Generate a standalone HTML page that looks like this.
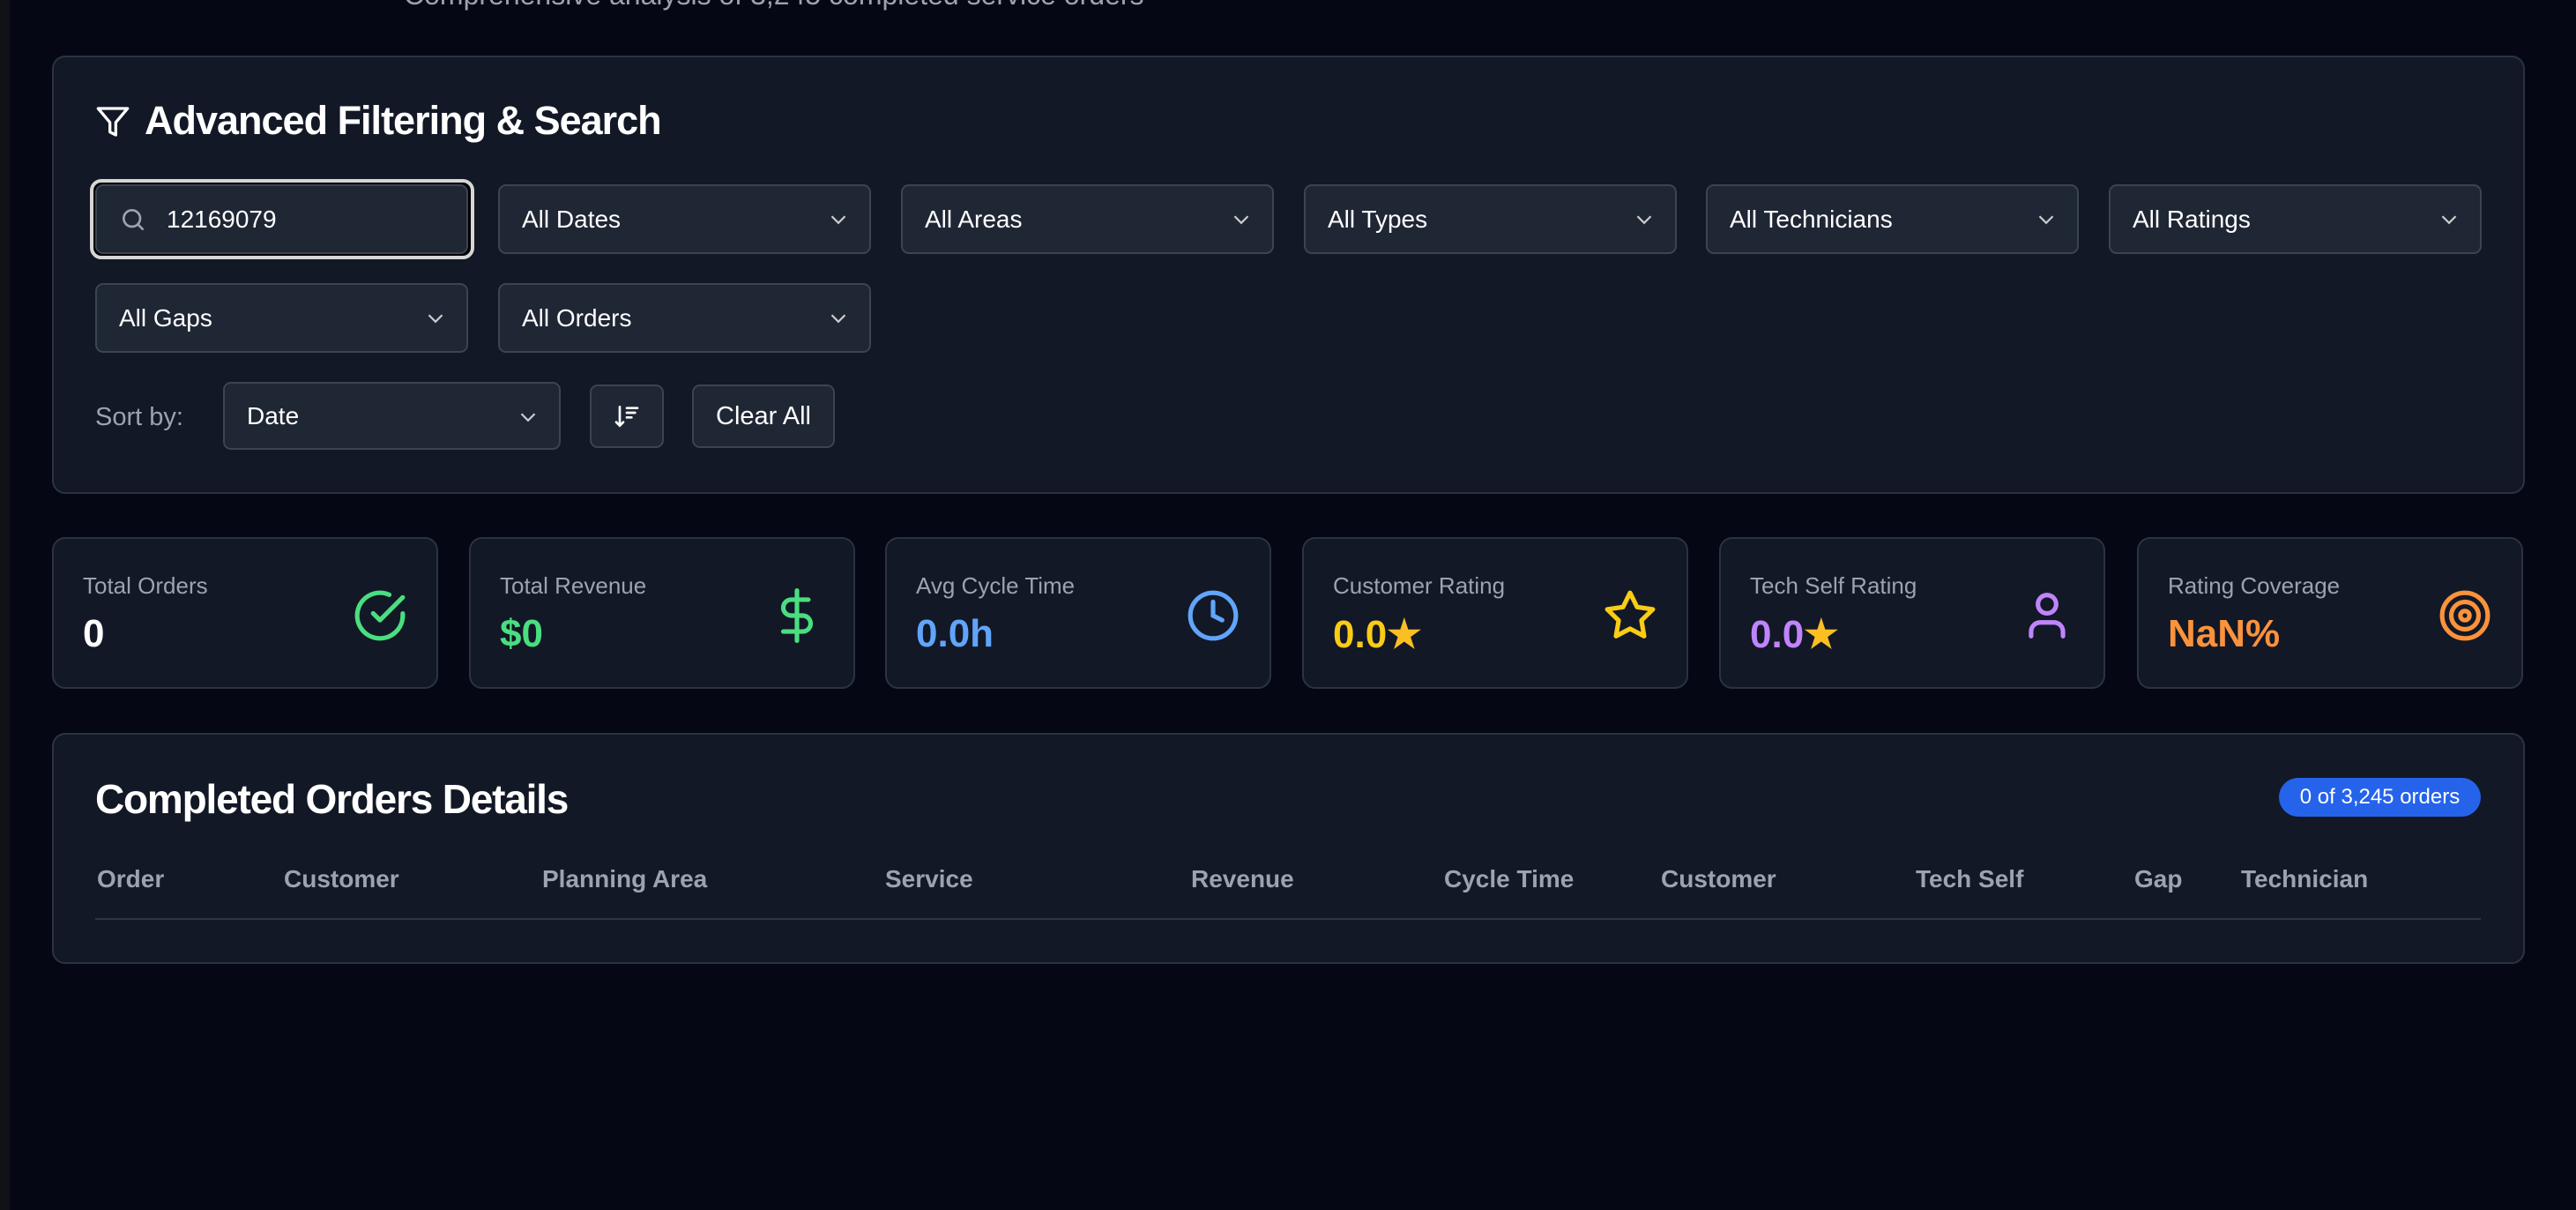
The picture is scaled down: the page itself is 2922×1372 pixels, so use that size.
<!DOCTYPE html>
<html><head><meta charset="utf-8"><style>
*{box-sizing:border-box;margin:0;padding:0}
body{width:2922px;height:1372px;background:#050814;font-family:"Liberation Sans",sans-serif;color:#fff;position:relative;overflow:hidden}
.strip{position:absolute;left:0;top:0;width:11px;height:1372px;background:#101218}
.abs{position:absolute}
.panel{position:absolute;background:#121826;border:2px solid #2b3343;border-radius:15px}
.ctl{position:absolute;height:79px;width:423px;background:#1f2634;border:2px solid #3b4455;border-radius:9px;font-size:28px;color:#fff;display:flex;align-items:center;padding-left:25px}
.ctl svg.chev{position:absolute;right:20px;top:23px}
.card{position:absolute;top:609px;width:438px;height:172px;background:#121826;border:2px solid #2b3343;border-radius:15px}
.card .l{position:absolute;left:33px;top:38px;font-size:26px;color:#9ca3af}
.card .v{position:absolute;left:33px;top:83px;font-size:44px;font-weight:bold}
.card svg{position:absolute;right:33px;top:56px}
.th{position:absolute;top:981px;font-size:28px;font-weight:bold;color:#9ca3af}
</style></head><body>
<div class="strip"></div>
<div class="abs" style="left:458px;top:-24px;font-size:32px;color:#9ca3af">Comprehensive analysis of 3,245 completed service orders</div>

<div class="panel" style="left:59px;top:63px;width:2805px;height:497px"></div>
<svg class="abs" style="left:108px;top:118px" width="40" height="40" viewBox="0 0 24 24" fill="none" stroke="#fff" stroke-width="2" stroke-linejoin="round"><path d="M22 3H2l8 9.46V19l4 2v-8.54L22 3z"/></svg>
<div class="abs" style="left:164px;top:111px;font-size:45px;font-weight:bold;letter-spacing:-1px">Advanced Filtering &amp; Search</div>

<div class="abs" style="left:102px;top:203px;width:436px;height:91px;border:4px solid #d6d6d6;border-radius:13px;background:#000"></div>
<div class="ctl" style="left:108px;top:209px;height:79px;">
<svg width="32" height="32" viewBox="0 0 24 24" fill="none" stroke="#9ca3af" stroke-width="2" stroke-linecap="round"><circle cx="11" cy="11" r="7"/><path d="M20 20l-4-4"/></svg><span style="margin-left:22px">12169079</span></div>

<div class="ctl" style="left:565px;top:209px">All Dates<svg class="chev" width="30" height="30" viewBox="0 0 24 24" fill="none" stroke="#ccc" stroke-width="1.8"><path d="M6 9l6 6 6-6"/></svg></div>
<div class="ctl" style="left:1022px;top:209px">All Areas<svg class="chev" width="30" height="30" viewBox="0 0 24 24" fill="none" stroke="#ccc" stroke-width="1.8"><path d="M6 9l6 6 6-6"/></svg></div>
<div class="ctl" style="left:1479px;top:209px">All Types<svg class="chev" width="30" height="30" viewBox="0 0 24 24" fill="none" stroke="#ccc" stroke-width="1.8"><path d="M6 9l6 6 6-6"/></svg></div>
<div class="ctl" style="left:1935px;top:209px">All Technicians<svg class="chev" width="30" height="30" viewBox="0 0 24 24" fill="none" stroke="#ccc" stroke-width="1.8"><path d="M6 9l6 6 6-6"/></svg></div>
<div class="ctl" style="left:2392px;top:209px">All Ratings<svg class="chev" width="30" height="30" viewBox="0 0 24 24" fill="none" stroke="#ccc" stroke-width="1.8"><path d="M6 9l6 6 6-6"/></svg></div>
<div class="ctl" style="left:108px;top:321px">All Gaps<svg class="chev" width="30" height="30" viewBox="0 0 24 24" fill="none" stroke="#ccc" stroke-width="1.8"><path d="M6 9l6 6 6-6"/></svg></div>
<div class="ctl" style="left:565px;top:321px">All Orders<svg class="chev" width="30" height="30" viewBox="0 0 24 24" fill="none" stroke="#ccc" stroke-width="1.8"><path d="M6 9l6 6 6-6"/></svg></div>

<div class="abs" style="left:108px;top:457px;font-size:29px;color:#9ca3af">Sort by:</div>
<div class="ctl" style="left:253px;top:433px;width:383px;height:77px">Date<svg class="chev" width="30" height="30" viewBox="0 0 24 24" fill="none" stroke="#ccc" stroke-width="1.8"><path d="M6 9l6 6 6-6"/></svg></div>
<div class="ctl" style="left:669px;top:436px;width:84px;height:72px;padding:0;justify-content:center">
<svg width="32" height="32" viewBox="0 0 24 24" fill="none" stroke="#fff" stroke-width="2" stroke-linecap="round"><path d="M6 4v16M3 17l3 3 3-3M12 5h9M12 9h7M12 13h4"/></svg></div>
<div class="ctl" style="left:785px;top:436px;width:162px;height:72px;padding:0;justify-content:center;font-size:29px">Clear All</div>

<div class="card" style="left:59px"><div class="l">Total Orders</div><div class="v">0</div>
<svg width="62" height="62" viewBox="0 0 24 24" fill="none" stroke="#4ade80" stroke-width="2" stroke-linecap="round" stroke-linejoin="round"><path d="M22 11.08V12a10 10 0 1 1-5.93-9.14"/><path d="M22 4L12 14.01l-3-3"/></svg></div>
<div class="card" style="left:532px"><div class="l">Total Revenue</div><div class="v" style="color:#4ade80">$0</div>
<svg width="62" height="62" viewBox="0 0 24 24" fill="none" stroke="#4ade80" stroke-width="2" stroke-linecap="round"><path d="M12 1v22M17 5H9.5a3.5 3.5 0 0 0 0 7h5a3.5 3.5 0 0 1 0 7H6"/></svg></div>
<div class="card" style="left:1004px"><div class="l">Avg Cycle Time</div><div class="v" style="color:#60a5fa">0.0h</div>
<svg width="62" height="62" viewBox="0 0 24 24" fill="none" stroke="#60a5fa" stroke-width="2" stroke-linecap="round"><circle cx="12" cy="12" r="10"/><path d="M12 6v6l4 2"/></svg></div>
<div class="card" style="left:1477px"><div class="l">Customer Rating</div><div class="v" style="color:#facc15">0.0<span style="color:#fbbf24">★</span></div>
<svg width="62" height="62" viewBox="0 0 24 24" fill="none" stroke="#facc15" stroke-width="2" stroke-linejoin="round"><path d="M12 2l3.09 6.26L22 9.27l-5 4.87 1.18 6.88L12 17.77l-6.18 3.25L7 14.14 2 9.27l6.91-1.01L12 2z"/></svg></div>
<div class="card" style="left:1950px"><div class="l">Tech Self Rating</div><div class="v" style="color:#c084fc">0.0<span style="color:#fbbf24">★</span></div>
<svg width="62" height="62" viewBox="0 0 24 24" fill="none" stroke="#c084fc" stroke-width="2" stroke-linecap="round"><path d="M19 21v-2a4 4 0 0 0-4-4H9a4 4 0 0 0-4 4v2"/><circle cx="12" cy="7" r="4"/></svg></div>
<div class="card" style="left:2424px"><div class="l">Rating Coverage</div><div class="v" style="color:#fb923c">NaN%</div>
<svg width="62" height="62" viewBox="0 0 24 24" fill="none" stroke="#fb923c" stroke-width="2"><circle cx="12" cy="12" r="10"/><circle cx="12" cy="12" r="6"/><circle cx="12" cy="12" r="2"/></svg></div>

<div class="panel" style="left:59px;top:831px;width:2805px;height:262px"></div>
<div class="abs" style="left:108px;top:879px;font-size:46px;font-weight:bold;letter-spacing:-1.2px">Completed Orders Details</div>
<div class="abs" style="left:2585px;top:882px;width:229px;height:44px;background:#2563eb;border-radius:22px;font-size:24px;display:flex;align-items:center;justify-content:center">0 of 3,245 orders</div>
<div class="th" style="left:110px">Order</div>
<div class="th" style="left:322px">Customer</div>
<div class="th" style="left:615px">Planning Area</div>
<div class="th" style="left:1004px">Service</div>
<div class="th" style="left:1351px">Revenue</div>
<div class="th" style="left:1638px">Cycle Time</div>
<div class="th" style="left:1884px">Customer</div>
<div class="th" style="left:2173px">Tech Self</div>
<div class="th" style="left:2421px">Gap</div>
<div class="th" style="left:2542px">Technician</div>
<div class="abs" style="left:108px;top:1041px;width:2706px;height:2px;background:#2e3645"></div>
</body></html>
